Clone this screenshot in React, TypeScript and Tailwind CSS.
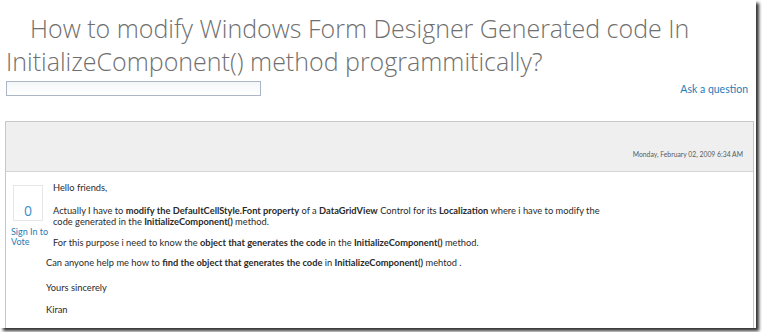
export default function App() {
  const body = "font-['Lato','Liberation_Sans',sans-serif] text-[9.3px] leading-[11px] text-[#2a2a2a] whitespace-nowrap";
  return (
    <div className="w-[762px] h-[332px] bg-white overflow-hidden">
      <div className="w-[756px] h-[328px] bg-white shadow-[3px_3px_3px_rgba(0,0,0,0.8)] flex flex-col">
        <h1 className="pl-[6px] pt-[12px] font-['Open_Sans','Liberation_Sans',sans-serif] font-light text-[25px] leading-[33px] text-[#707070] whitespace-nowrap">
          <span className="pl-[24px]">How to modify Windows Form Designer Generated code In</span>
          <br />
          InitializeComponent() method programmitically?
        </h1>

        <div className="flex items-center justify-between pl-[6px] pr-[8px] mt-[2px]">
          <div className="w-[255px] h-[15px] border border-[#aab6c6] bg-gradient-to-b from-[#f4f6f8] to-white" />
          <a className="font-['Lato','Liberation_Sans',sans-serif] text-[10.5px] text-[#1f7bb6] mt-[2px]">Ask a question</a>
        </div>

        <div className="mt-[23px] ml-[5px] mr-[2px] flex-1 border border-[#c7c7c7] border-b-0 flex flex-col">
          <div className="h-[50px] bg-[#efefef] border-b border-[#d4d4d4] flex items-end justify-end pr-[10px] pb-[12px]">
            <span className="font-['Lato','Liberation_Sans',sans-serif] text-[6.8px] text-[#5a5a5a]">
              Monday, February 02, 2009 6:34 AM
            </span>
          </div>

          <div className="flex pt-[10px]">
            <div className="w-[47px] shrink-0 flex flex-col items-start pl-[5px]">
              <div className="ml-[2px] mt-[3px] w-[30px] h-[36px] border border-[#e6e6e6] flex items-end justify-center pb-[1px]">
                <span className="font-['Open_Sans','Liberation_Sans',sans-serif] text-[14px] leading-[16px] text-[#3b8fca]">0</span>
              </div>
              <div className="mt-[6px] font-['Lato','Liberation_Sans',sans-serif] text-[9px] leading-[10px] text-[#1f7bb6]">
                Sign In to
                <br />
                Vote
              </div>
            </div>

            <div className={body + " flex flex-col"}>
              <p>Hello friends,</p>
              <p className="mt-[12px]">
                Actually I have to <b>modify the DefaultCellStyle.Font property</b> of a <b>DataGridView</b> Control for its <b>Localization</b> where i have to modify the
                <br />
                code generated in the <b>InitializeComponent()</b> method.
              </p>
              <p className="mt-[10px]">
                For this purpose i need to know the <b>object that generates the code</b> in the <b>InitializeComponent()</b> method.
              </p>
              <p className="mt-[9px] ml-[-7px]">
                Can anyone help me how to <b>find the object that generates the code</b> in <b>InitializeComponent()</b> mehtod .
              </p>
              <p className="mt-[14px] ml-[-7px]">Yours sincerely</p>
              <p className="mt-[11px] ml-[-7px]">Kiran</p>
            </div>
          </div>
        </div>
      </div>
    </div>
  );
}
